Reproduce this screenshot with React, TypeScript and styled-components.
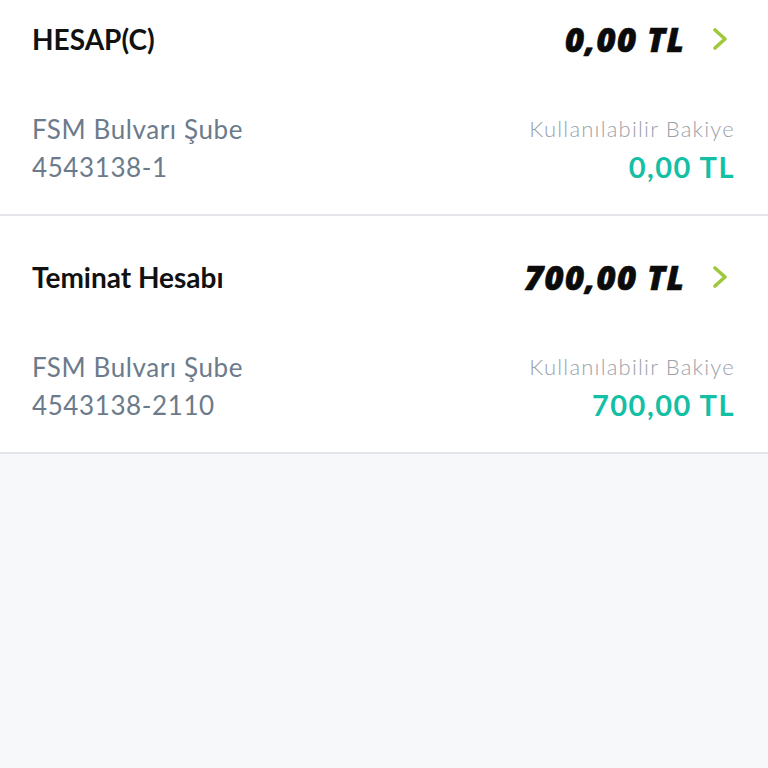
import React from "react";
import styled, { createGlobalStyle } from "styled-components";

type Account = {
  title: string;
  amount: string;
  branch: string;
  number: string;
  available: string;
};

const accounts: Account[] = [
  { title: "HESAP(C)", amount: "0,00 TL", branch: "FSM Bulvarı Şube", number: "4543138-1", available: "0,00 TL" },
  { title: "Teminat Hesabı", amount: "700,00 TL", branch: "FSM Bulvarı Şube", number: "4543138-2110", available: "700,00 TL" },
];

const GlobalStyle = createGlobalStyle`
  html, body {
    margin: 0;
    padding: 0;
    background: #f7f8fa;
    font-family: Lato, "Open Sans", sans-serif;
  }
  #root {
    min-height: 768px;
    overflow: hidden;
  }
`;

const Chevron = () => (
  <svg width="22" height="22" viewBox="0 0 22 22" fill="none">
    <path d="M5 2 L15 11 L5 20" stroke="#9fc83c" strokeWidth="3.6" strokeLinecap="round" strokeLinejoin="round" />
  </svg>
);

const AccountCard = ({ account }: { account: Account }) => (
  <Card>
    <Header>
      <Title>{account.title}</Title>
      <AmountWrap>
        <Amount>{account.amount}</Amount>
        <ChevronBox>
          <Chevron />
        </ChevronBox>
      </AmountWrap>
    </Header>
    <Details>
      <Column>
        <Info>{account.branch}</Info>
        <Info>{account.number}</Info>
      </Column>
      <Column $right>
        <Label>Kullanılabilir Bakiye</Label>
        <Available>{account.available}</Available>
      </Column>
    </Details>
  </Card>
);

const App = () => {
  return (
    <>
      <GlobalStyle />
      <List>
        {accounts.map(a => (
          <AccountCard key={a.number} account={a} />
        ))}
      </List>
    </>
  );
};

const List = styled.div`
  display: flex;
  flex-direction: column;
  margin-top: -22px;
`;

const Card = styled.div`
  background: #fff;
  border-bottom: 2px solid #e3e5e8;
  padding: 43px 33px 28px 32px;
`;

const Header = styled.div`
  display: flex;
  align-items: center;
  justify-content: space-between;
  height: 36px;
`;

const Title = styled.div`
  font-size: 28px;
  font-weight: 700;
  color: #111;
`;

const AmountWrap = styled.div`
  display: flex;
  align-items: center;
  gap: 25px;
`;

const Amount = styled.div`
  font-family: "Open Sans", Lato, sans-serif;
  font-size: 33px;
  font-weight: 800;
  font-style: italic;
  color: #0b0b0b;
  letter-spacing: 1.2px;
  -webkit-text-stroke: 0.6px #0b0b0b;
`;

const ChevronBox = styled.div`
  display: flex;
  width: 22px;
  height: 22px;
  margin-right: 3px;
`;

const Details = styled.div`
  display: flex;
  justify-content: space-between;
  margin-top: 53px;
`;

const Column = styled.div<{ $right?: boolean }>`
  display: flex;
  flex-direction: column;
  align-items: ${p => (p.$right ? "flex-end" : "flex-start")};
`;

const Info = styled.div`
  font-size: 26px;
  line-height: 38px;
  letter-spacing: 0.6px;
  color: #6c7b8b;
`;

const Label = styled.div`
  font-size: 22px;
  font-weight: 300;
  line-height: 38px;
  letter-spacing: 1.2px;
  color: #9ba1aa;
`;

const Available = styled.div`
  font-size: 29px;
  font-weight: 700;
  line-height: 38px;
  letter-spacing: 1.5px;
  color: #14bfa6;
`;

export default App;
